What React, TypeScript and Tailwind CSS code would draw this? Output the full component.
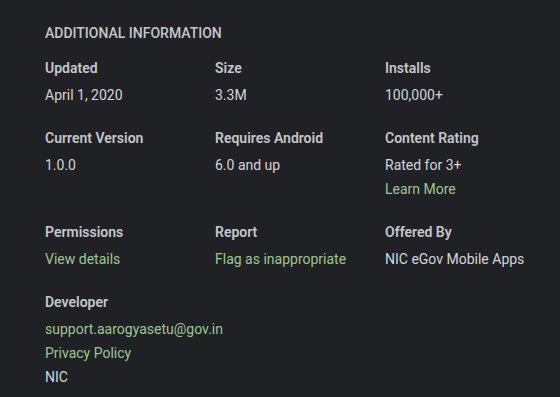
import React from "react";

type Item = { label: string; values: { text: string; link?: boolean }[] };

const rows: Item[][] = [
  [
    { label: "Updated", values: [{ text: "April 1, 2020" }] },
    { label: "Size", values: [{ text: "3.3M" }] },
    { label: "Installs", values: [{ text: "100,000+" }] },
  ],
  [
    { label: "Current Version", values: [{ text: "1.0.0" }] },
    { label: "Requires Android", values: [{ text: "6.0 and up" }] },
    {
      label: "Content Rating",
      values: [{ text: "Rated for 3+" }, { text: "Learn More", link: true }],
    },
  ],
  [
    { label: "Permissions", values: [{ text: "View details", link: true }] },
    { label: "Report", values: [{ text: "Flag as inappropriate", link: true }] },
    { label: "Offered By", values: [{ text: "NIC eGov Mobile Apps" }] },
  ],
  [
    {
      label: "Developer",
      values: [
        { text: "support.aarogyasetu@gov.in", link: true },
        { text: "Privacy Policy", link: true },
        { text: "NIC" },
      ],
    },
  ],
];

function Cell({ item }: { item: Item }) {
  return (
    <div className="flex flex-col">
      <div className="text-[14px] leading-[20px] font-semibold text-[#c4c7ca]">{item.label}</div>
      <div className="mt-[5px] flex flex-col">
        {item.values.map((v, i) => (
          <div
            key={i}
            className={
              "text-[14px] leading-[24px] whitespace-nowrap " +
              (v.link ? "text-[#9cc794]" : "text-[#d3d5d8]")
            }
          >
            {v.text}
          </div>
        ))}
      </div>
    </div>
  );
}

export default function App() {
  return (
    <div
      className="w-[560px] h-[397px] bg-[#202124] overflow-hidden pl-[45px] pt-[23px]"
      style={{ fontFamily: "Roboto, 'Noto Sans', sans-serif" }}
    >
      <div className="text-[14px] leading-[20px] font-medium uppercase text-[#c4c7ca]">
        Additional Information
      </div>
      <div className="mt-[15px] flex flex-col gap-[21px]">
        {rows.map((row, ri) => (
          <div key={ri} className="grid grid-cols-[170px_170px_170px]">
            {row.map((item, ci) => (
              <Cell key={ci} item={item} />
            ))}
          </div>
        ))}
      </div>
    </div>
  );
}
